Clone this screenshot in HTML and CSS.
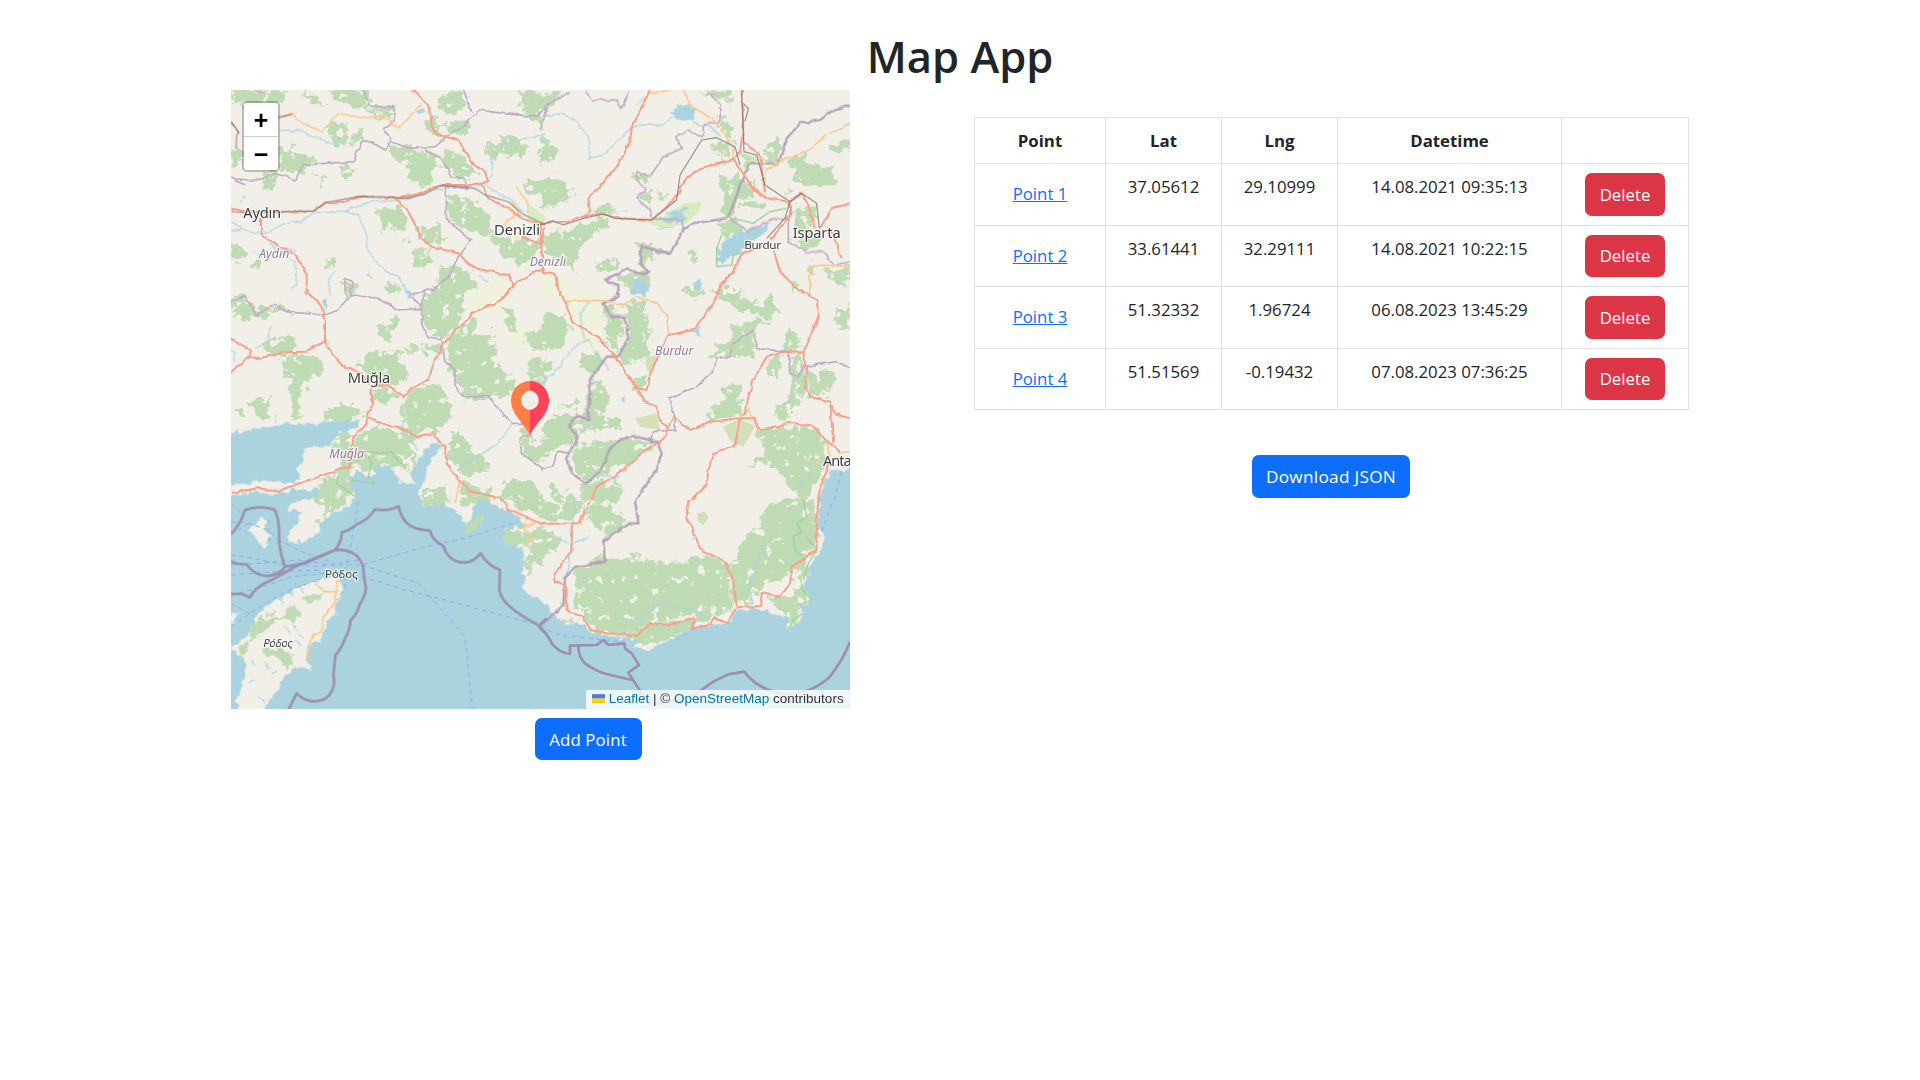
FILE: index.html
```html
<!DOCTYPE html>
<html lang="en">
<head>
<meta charset="utf-8">
<title>Map App</title>
<link rel="stylesheet" href="styles.css">
</head>
<body>
<h1 class="title">Map App</h1>
<main class="layout">
<section class="map-column">
<div class="map">
<svg class="map-canvas" viewBox="0 0 1857 1857" aria-label="Map of southwest Turkey">
<defs>
<filter id="rough" filterUnits="userSpaceOnUse" x="0" y="0" width="1857" height="1857" color-interpolation-filters="sRGB">
<feTurbulence type="fractalNoise" baseFrequency=".035" numOctaves="4" seed="4" result="n"/>
<feDisplacementMap in="SourceGraphic" in2="n" scale="52" xChannelSelector="R" yChannelSelector="G" result="d"/>
<feTurbulence type="fractalNoise" baseFrequency=".035" numOctaves="4" seed="11"/>
<feColorMatrix values="0 0 0 0 0  0 0 0 0 0  0 0 0 0 0  12 0 0 0 -7.9" result="holes"/>
<feComposite in="d" in2="holes" operator="out"/>
</filter>
<filter id="coast" filterUnits="userSpaceOnUse" x="-60" y="-60" width="1980" height="1980" color-interpolation-filters="sRGB">
<feTurbulence type="fractalNoise" baseFrequency=".045" numOctaves="3" seed="7"/>
<feDisplacementMap in="SourceGraphic" scale="26" xChannelSelector="R" yChannelSelector="G"/>
</filter>
<filter id="wiggle" filterUnits="userSpaceOnUse" x="-60" y="-60" width="1980" height="1980" color-interpolation-filters="sRGB">
<feTurbulence type="fractalNoise" baseFrequency=".04" numOctaves="2" seed="2"/>
<feDisplacementMap in="SourceGraphic" scale="12" xChannelSelector="R" yChannelSelector="G"/>
</filter>
</defs>
<rect class="land" width="1857" height="1857"/>

<g class="pale">
<g transform="translate(-18 -15)"><path d="M760 630L780 600 835 565 860 600 845 640ZM600 130L640 120 655 150 625 160Z"/><path class="lime" d="M905 350L960 395 960 425 910 400Z"/></g>
<g transform="translate(927 -15)"><path d="M0 555L60 575 90 600 175 625 200 640 0 640ZM275 150L340 140 330 160 290 165Z"/><path class="lime" d="M310 410L370 395 430 355 485 350 480 375 440 415 370 430ZM610 210L655 210 650 235 620 230Z"/></g>
<g transform="translate(-18 600)"><path d="M740 0L860 0 840 50 820 70 740 70 720 50ZM875 110L905 105 905 145 875 175 835 190Z"/></g>
<g transform="translate(927 600)"><path d="M60 0L195 0 190 35 185 75 180 140 190 195 185 215 150 180 130 150 90 120 75 50Z"/><path class="scrub" d="M285 385L350 370 360 420 300 410ZM550 410L600 385 645 410 610 470 570 450ZM315 200L350 195 340 250 320 240ZM470 670L495 665 505 685 490 705 475 695Z"/></g>
</g>

<g class="forest" filter="url(#rough)">
<g transform="translate(-18 -15)">
<path d="M18 15L190 20 160 60 100 70 20 60ZM230 20L270 30 310 60 260 55ZM300 10L430 15 440 60 380 70 320 40ZM415 65L510 70 500 105 450 95ZM310 115L360 110 370 180 330 190 315 150ZM380 140L420 135 410 165 380 175ZM160 185L230 200 280 225 260 245 200 265 160 240ZM20 180L55 210 30 255 18 250ZM110 265L165 240 150 300 115 330ZM270 265L305 270 290 300ZM350 235L390 245 370 285 345 265ZM480 175L600 190 650 240 625 265 615 300 570 305 540 240 500 215ZM590 100L640 110 640 150 600 145ZM645 120L730 110 740 140 690 150ZM655 200L720 210 760 270 710 285 660 235ZM640 30L710 15 730 55 690 90 640 70ZM780 180L860 150 930 180 890 210 800 215ZM885 20L955 20 950 130 910 90 880 50ZM895 280L955 290 960 340 910 320ZM450 380L530 360 545 390 530 430 470 440ZM580 430L650 415 650 475 600 480ZM530 465L560 470 550 490ZM670 330L740 340 790 390 810 450 740 440 670 400ZM800 450L940 470 930 520 880 545 820 500ZM560 500L610 495 630 535 580 550ZM300 520L340 525 310 550ZM20 490L60 490 50 525 20 515ZM80 495L115 525 90 555ZM425 565L440 570 430 590ZM640 540L720 550 760 600 700 630 640 610ZM480 590L525 600 520 630 490 625ZM350 590L400 600 370 640Z"/></g>
<g transform="translate(927 -15)">
<path d="M0 20L70 20 30 70 0 80ZM0 150L45 180 50 230 0 240ZM0 280L60 280 105 320 60 360 0 365ZM480 20L575 15 580 45 540 45ZM530 100L570 100 585 180 560 160 540 140ZM520 175L565 180 560 225 525 205ZM270 255L330 265 320 300 290 290ZM300 325L335 320 325 365 300 350ZM150 370L230 360 240 385 170 390ZM540 280L610 260 605 330 580 370 570 400 540 390 550 340ZM600 300L650 290 640 330 600 340ZM600 210L640 215 630 250 605 250ZM670 200L720 165 720 220 680 230ZM740 220L790 210 830 250 880 245 895 290 850 310 770 290ZM600 350L680 345 670 380 620 370ZM735 310L750 320 745 340ZM770 360L830 370 830 400 800 430 810 470 770 440ZM860 180L930 175 930 200 870 200ZM10 450L100 430 190 400 200 430 150 450 130 480 110 500 100 560 70 540 70 500 10 510ZM160 530L230 530 230 560 180 560ZM290 475L370 480 390 510 320 520 300 545ZM530 420L590 400 620 430 560 470ZM440 495L470 500 470 535 450 525ZM245 560L325 565 330 600 300 640 250 600 230 580ZM760 470L840 450 830 490 790 490ZM790 540L820 530 830 570 800 560ZM850 560L930 540 930 610 880 590ZM430 605L490 615 490 640 440 630ZM740 590L770 600 760 625ZM345 320L390 325 370 340Z"/></g>
<g transform="translate(-18 600)">
<path d="M20 20L60 10 80 60 150 40 200 60 110 80 60 90 20 70ZM120 160L200 130 220 170 190 190 105 190ZM170 200L270 195 290 250 240 280 230 320 220 390 190 395 205 340 190 270ZM60 340L140 315 130 370 100 390 80 360ZM25 360L55 360 50 380ZM300 350L400 345 420 380 380 390 300 395ZM390 225L450 185 520 190 545 250 530 285 440 280ZM440 300L510 300 515 325 480 345 450 325ZM460 110L510 80 520 120 480 150ZM530 170L585 165 580 190 530 185ZM590 170L650 165 640 190 600 190ZM550 300L640 280 680 340 665 420 550 430 545 360ZM530 340L545 340 540 395 520 375ZM595 0L720 0 720 70 680 120 650 150 610 120 580 60ZM660 160L740 85 755 110 740 130 810 120 815 230 870 280 860 320 780 320 720 325 700 280 670 220ZM830 50L870 60 870 130 850 110ZM905 130L960 120 960 190 910 180ZM910 210L960 200 960 310 920 280ZM680 420L720 440 735 490 780 500 790 550 730 560 690 540 670 480ZM400 430L460 400 560 430 570 500 500 490 460 540 410 550 370 520 380 470ZM330 430L370 430 380 480 370 560 330 560 340 510ZM290 570L380 550 390 610 310 640 260 630ZM430 480L530 490 550 550 520 530 460 530ZM560 500L600 510 590 570 560 540ZM590 600L660 590 680 640 590 640ZM710 580L800 600 800 640 710 640ZM830 580L870 565 950 590 950 640 830 620ZM890 400L910 400 920 460 960 460 960 510 920 520 890 490Z"/></g>
<g transform="translate(927 600)">
<path d="M0 80L60 65 100 120 85 140 50 180 0 170ZM190 40L230 50 250 120 240 150 200 140ZM250 35L320 35 325 140 320 210 240 220 235 190 265 150 260 90ZM190 150L240 150 230 190ZM120 180L170 190 185 240 150 260 120 220ZM0 210L30 210 40 240 0 270ZM160 280L200 290 200 350 180 380 240 390 240 415 170 410 130 430 90 400 140 360ZM280 260L320 270 310 300 280 295ZM510 0L600 0 640 30 710 30 715 60 680 90 620 70 560 40ZM500 190L570 150 570 110 640 90 680 100 640 130 645 210 600 200 520 200ZM730 150L760 125 790 170 730 180ZM690 210L730 190 710 260 685 250ZM800 240L870 235 885 270 870 310 810 315ZM755 200L785 200 800 270 785 330 750 380 700 380 740 320ZM500 360L560 330 540 300 600 280 600 370 560 390 500 390ZM640 400L700 420 760 405 830 420 850 460 860 510 840 560 790 630 770 640 740 560 680 520 620 530 680 480ZM10 400L60 370 120 400 110 450 70 470 10 490ZM60 350L110 330 100 360ZM100 460L200 450 250 440 340 450 330 480 260 530 220 520 190 550 140 575 100 530ZM100 480L200 490 190 540 140 560ZM130 590L190 560 250 600 220 640 120 640ZM30 590L70 600 70 630 40 630ZM880 60L930 50 930 120 890 110ZM0 460L20 450 10 490Z"/></g>
<g transform="translate(-18 1230)">
<path d="M290 0L370 -10 360 15 320 35 290 80 265 75 300 40ZM590 0L650 0 620 25ZM730 75L780 40 760 75 730 105ZM840 90L900 85 905 135 860 150 835 130ZM900 100L950 80 960 190 910 180ZM890 180L920 180 910 240ZM840 0L960 0 960 60 900 40Z"/></g>
<g transform="translate(927 1230)">
<path d="M0 20L120 -10 110 40 90 60 0 60ZM0 80L60 110 50 160 10 170ZM130 10L190 10 250 50 250 90 200 110 180 70 130 60ZM130 185L200 165 210 195 140 210ZM105 220L170 190 250 180 290 165 350 190 430 190 490 160 570 190 570 250 580 320 540 345 490 365 450 350 350 365 300 395 250 405 180 395 140 370 130 330 100 320 120 270 100 250ZM280 400L350 370 470 360 430 400 350 430 290 435ZM600 150L660 60 700 0 830 0 830 60 825 150 780 180 750 230 660 260 620 315 590 310ZM760 180L810 180 790 260 810 300 760 310 780 250ZM680 290L760 290 790 340 740 390 750 350 710 320ZM70 360L105 360 100 375ZM570 190L600 180 600 300 580 310ZM220 450L250 430 240 470Z"/></g>
</g>

<g class="water" filter="url(#coast)">
<path d="M-40 1028L52 1022 92 1010 182 1000 242 1003 312 993 382 988 394 995 382 1010 322 1030 307 1050 292 1070 232 1075 207 1090 217 1110 197 1135 212 1155 207 1170 162 1180 112 1170 62 1175 32 1185-40 1188Z"/>
<path d="M-40 1222L70 1208 132 1214 182 1200 242 1198 262 1205 245 1225 180 1240 170 1265 210 1260 200 1295 172 1330 172 1355 222 1355 262 1330 267 1300 312 1265 357 1250 372 1220 352 1170 372 1145 422 1160 432 1135 482 1120 502 1175 532 1180 552 1190 542 1150 562 1110 582 1080 602 1058 637 1065 617 1090 587 1130 582 1170 562 1210 572 1250 632 1240 672 1260 682 1275 712 1300 727 1255 742 1230 822 1255 862 1280 882 1310 822 1320 822 1360 882 1380 872 1430 882 1470 867 1495 942 1540 967 1570 1007 1605 1057 1600 1077 1630 1147 1640 1217 1650 1207 1675 1257 1680 1297 1655 1337 1640 1387 1615 1447 1600 1487 1605 1517 1560 1587 1555 1637 1575 1672 1580 1667 1630 1722 1570 1707 1550 1742 1530 1717 1495 1727 1460 1747 1410 1767 1380 1782 1340 1762 1310 1767 1260 1762 1230 1777 1180 1797 1145 1900 1130V1900H-40Z"/>
<path d="M1318 75L1345 50 1375 42 1390 65 1385 90 1350 92ZM1455 512L1475 455 1540 420 1625 400 1600 430 1560 455 1520 490 1475 518ZM1198 580L1225 570 1250 580 1245 620 1205 615ZM1388 575L1400 568 1413 582 1408 600 1388 600ZM1300 385L1340 370 1375 380 1350 398 1300 400ZM1300 370L1370 348 1365 362 1320 375ZM555 62L570 55 582 65 570 75ZM515 590L530 600 545 620 530 625ZM272 635L285 630 295 650 280 655ZM1388 730L1400 700 1412 745ZM1165 925L1180 922 1182 940Z"/>
</g>
<g transform="translate(-18 1230)" class="island" filter="url(#coast)">
<path d="M40 640L35 600 55 560 60 480 30 460 35 435 75 400 90 350 150 300 230 260 290 235 345 235 355 260 335 300 330 340 300 370 290 420 250 440 245 480 260 510 220 500 180 525 150 580 100 640ZM70 90L95 70 115 50 125 60 120 90 135 110 125 145 110 140 100 115 75 105ZM0 345L38 345 25 370 0 370ZM0 435L40 430 30 455 0 450Z"/></g>
<g transform="translate(-18 1230)" class="forest" filter="url(#coast)">
<path d="M38 445L75 420 80 375 110 350 120 365 180 340 205 310 225 335 210 365 160 355 120 395 90 405 60 455 50 475ZM230 295L260 280 295 285 280 300 245 310ZM115 440L150 455 165 440 200 465 205 495 185 505 160 470 125 470ZM120 345L150 330 145 350ZM730 75L780 40 760 75 735 105 722 95Z"/></g>

<g class="river" filter="url(#wiggle)">
<g transform="translate(-18 -15)"><path d="M160 135L230 138 280 160 340 185 345 155M18 410L50 430 90 445 130 440 180 415 230 410 270 380 360 378 440 350 500 348 570 335 620 315 720 305 770 300 800 270 800 220 840 175 920 155 960 150M360 380L400 390 425 450 430 500 480 560 520 575 545 615M18 440L50 435M45 350L60 330M130 470L160 500 210 530 215 600 200 615M330 560L310 590 315 630M780 300L830 330 870 350 890 380M150 490L215 495M760 570L790 590"/></g>
<g transform="translate(927 -15)"><path d="M0 95L70 85 110 110 145 155 150 220 190 210 250 150 290 120 370 120 400 95M460 115L510 125 540 155M350 430L400 425M245 380L260 380M290 60L310 40"/></g>
<g transform="translate(-18 600)"><path d="M135 110L130 150 90 175M300 30L300 60M18 180L30 190 25 215M150 375L150 400M860 400L830 450 760 500 700 530M540 430L580 480M545 380L530 410"/></g>
<g transform="translate(927 600)"><path d="M0 280L40 250 80 200 110 160 150 150 170 190 210 240M150 30L120 70 130 150M120 430L155 405M130 590L160 555 240 560M760 600L820 550"/></g>
<g transform="translate(927 1230)"><path d="M105 0L95 130 80 220M95 135L150 108M95 135L65 120M680 120L650 180 645 230 625 270 640 310M290 355L350 320 370 300 400 320 470 335 495 365M455 110L470 120"/></g>
<g transform="translate(-18 1230)"><path d="M160 290L175 310M195 275L205 290M225 260L235 280M180 380L195 400M205 375L220 395M220 400L235 415M210 420L230 440M80 480L90 500M120 490L130 510M70 550L90 540M100 590L120 605M140 520L155 515"/></g>
</g>
<g class="park">
<path transform="translate(-18 600)" d="M340 555L335 580 365 600 390 620M425 485L470 490 500 485 520 515 545 530M430 500L440 520 430 560 450 580 380 570"/>
<path transform="translate(927 -15)" d="M545 450L530 490 530 545 575 540 580 510 620 500M580 400L640 415 690 380 740 370"/>
<path transform="translate(927 1230)" d="M790 0L800 50 770 70 785 95 760 110 765 150 790 170M800 110L830 150 805 190 790 240M780 260L815 300 780 315M740 400L760 360 790 340"/>
</g>

<g class="ferry">
<path transform="translate(-18 1230)" d="M18 165L60 170 180 195 280 200 400 180M18 195L100 190 220 180 320 195 410 195 600 140 700 120 880 65M18 225L150 215 290 210M18 285L100 265 200 230 300 220M18 380L90 330 180 275 290 235M18 310L90 350M160 120L230 155 330 190M18 65L70 70 130 90 160 120M18 10L55 45M130 60L135 130M400 5L375 150 360 210 360 265 335 300M410 195L580 250 720 410 742 627M410 230L540 270 640 295 960 380M18 105L70 70"/>
<path transform="translate(927 1230)" d="M0 380L60 405 150 415 240 425 275 410M410 420L460 385M875 10L840 110M910 -110L880 10"/></g>

<g class="border" filter="url(#wiggle)">
<g transform="translate(-18 -15)"><path d="M410 15L440 65 505 65 510 110 475 130 500 165 480 195 430 165 410 170 385 230 300 235 235 240 210 285 150 265 110 285 70 285 18 280M500 170L550 190 630 185 660 155 720 120 765 75 830 85 935 95 960 70M600 195L650 220 680 275 720 280 725 310 660 305 665 405 740 465 700 515 670 575 630 610 560 628M715 15L740 80M18 280L60 300M360 630L360 580 385 590 375 630M90 18L120 20"/></g>
<g transform="translate(927 -15)"><path d="M0 135L15 100 20 60 90 20M135 20L160 45 230 45 245 70 265 20M500 20L540 55 540 110 490 120 490 155 470 150 450 135 410 155 425 190 370 215 330 275 290 260 290 285 320 310 290 340 330 375 335 400 425 405 430 435M570 400L620 440 700 400 745 400 745 470 800 500 850 500 880 540 930 530"/></g>
<g transform="translate(-18 600)"><path d="M18 35L60 20 95 78 150 40 180 65 240 70 300 75 340 60 380 15 460 25 520 60 590 55 600 0M560 20L590 50 590 100 610 140 650 150 660 215 690 240 690 290 720 320 790 320 860 400 920 400M920 430L885 445 890 490 960 540"/></g>
<g transform="translate(927 600)"><path d="M200 200L235 200M335 460L340 425 405 420 405 380 385 325 470 290 520 245 530 205 570 200 580 160 640 120 650 175 745 185 750 250 775 260 790 230 890 215 930 235M0 540L40 530 50 485 90 485"/></g>
</g>
<g class="border thick" filter="url(#wiggle)">
<path transform="translate(927 -15)" d="M930 60L880 75 840 105 780 115 740 160 715 235 630 235 610 270 580 360 560 400 460 415 430 435 390 505 305 485 300 535 325 560 310 570 260 550 195 585 235 600 235 630"/>
<path transform="translate(927 600)" d="M235 0L235 20 190 40 215 80 255 80 265 150 230 200 200 200 150 270 145 390 110 375 85 410 115 440 80 500 95 550 140 580 180 545 205 490Q225 445 280 438L350 455 365 490 350 540 285 630"/>
<path transform="translate(927 1230)" d="M285 0L295 70 265 70 190 125 195 185 100 205 75 230 70 315 0 378"/>
</g>
<g class="sea-border">
<path transform="translate(-18 1230)" d="M18 102Q45 75 60 30Q100 15 148 28Q165 60 162 120 165 160 180 200Q165 225 125 228 85 225 65 193 40 195 18 185M18 282L50 281 75 292Q90 260 140 240L210 200Q265 175 330 150Q385 145 405 180 417 195 416 225L423 265Q420 290 403 315 398 340 376 362 375 390 360 415 350 445 331 466L325 525Q335 570 300 597 250 617 215 580L190 630M180 200L240 190 330 150Q350 125 350 97 375 90 395 73 430 60 450 28 490 35 520 18 530 60 555 77 580 90 615 92 620 120 655 138 665 170 690 182 735 200 767 160 785 195 825 210L823 270Q830 300 855 320 890 350 935 372L965 402M940 378L965 355"/>
<path transform="translate(927 1230)" d="M0 385Q25 405 35 430 60 460 90 462V437L170 435 190 420 205 435 253 430 255 445 275 460 297 495 265 518 305 580 335 615M115 437Q115 470 135 490 170 515 200 522L275 540M335 612Q430 600 470 580L520 545 565 523 613 515Q650 565 720 580 800 590 865 535 910 480 930 425"/></g>

<g class="road minor" filter="url(#wiggle)">
<path transform="translate(-18 -15)" d="M160 100L200 87 235 115 290 140 340 85 420 100 470 90 520 128 550 100 590 58M840 365L870 390 835 420 880 460M875 300L905 350 910 385M860 350L880 380 850 410"/>
<path transform="translate(927 -15)" d="M330 25L390 15M430 15L450 60 530 110 580 190 580 220M670 300L680 255 740 220 800 200 860 150 930 115M810 630L810 545 850 540 930 545"/>
<path transform="translate(927 600)" d="M75 35L180 30 250 45 290 20 350 40 380 75 385 130M600 385L625 360 640 385M865 460L870 500M900 487L930 485M810 0L810 15"/>
<path transform="translate(-18 1230)" d="M340 240L330 280 330 310 295 350 290 390 262 405 245 470 260 485M270 250L300 275 330 275M690 10L705 -60M905 50L900 85 920 120 895 140M885 85L935 65"/>
</g>
<g class="road" filter="url(#wiggle)">
<path transform="translate(-18 -15)" d="M565 15L615 70 620 120 640 150 700 165 740 235 780 260 790 290 750 300 680 300 640 300 590 325 520 340 410 335 340 355 300 355 265 378 160 380 60 380 18 370M108 400L108 445 160 485 210 505 245 570 245 630M510 340L550 380 590 460 620 485 700 505 750 550 850 570 865 600 910 570 960 550M865 600L840 630M770 300L790 340 850 370 890 400 950 420M890 455L950 480 955 425M18 110L40 145"/>
<path transform="translate(927 -15)" d="M330 15L275 130 270 170 235 240 175 310 145 340 150 380 120 400 70 410 0 415M0 420L5 500 10 560 45 570 60 630M130 395L185 385 225 398 335 405 380 365 415 325 440 280 480 250 580 225 600 200 610 130 605 15M580 225L640 310 680 340 750 350 785 325 805 360 825 430M610 170L660 210 675 325M750 350L750 390 720 430 690 465M535 630L540 600 580 560 605 505 670 485M700 490L720 560 790 630M930 355L875 370 840 430M870 430L905 520"/>
<path transform="translate(-18 600)" d="M245 0L290 50 300 100 300 155 320 190 350 225 410 250 440 290 490 285 535 320 560 295 610 270 630 210 655 165 690 120 730 90 740 70 830 30 855 0M18 148L75 180 70 200 18 250M70 203L110 203 180 187 240 185 300 155M435 290L445 340 425 380 425 400 385 440 375 530 340 540 300 555 220 580 160 605 100 595 18 608M420 382L500 410 540 420 575 440 620 430 660 470 665 520 700 570 740 605 830 625"/>
<path transform="translate(927 600)" d="M60 0L100 100 180 145 240 220 290 295 320 300 340 230 385 135 460 120 520 40 535 0M295 300L310 335 350 350 365 400 385 410 400 380 450 420 510 395 600 385 640 385 660 420 720 410 740 395 820 410 870 460 900 485M385 410L380 440 310 485 260 530 230 555 170 590 155 630M600 385L585 465 520 490 505 540 500 585 455 630M610 375L640 270 680 200 715 187 790 187 835 80 830 30 780 0M790 187L800 250 795 290 810 320 870 335 880 460M875 345L885 370 930 385M870 520L840 590 835 630"/>
<path transform="translate(927 1230)" d="M150 0L130 40 120 70 0 72M95 75L95 150 45 220 45 245 75 258 80 330 130 350 150 390 200 400 290 405 330 370 380 375 465 355 460 385 510 375 520 350 560 370 590 322 660 318 665 280 720 290 755 240 755 200 830 150 830 60 835 0M445 0L440 50 470 120 480 145 560 190 580 240 590 320"/>
<path transform="translate(-18 1230)" d="M830 -5L850 25 910 55 960 75"/>
</g>
<g class="rail">
<path transform="translate(-18 -15)" d="M18 380L60 383 160 383 210 378 265 378 305 352 410 333 470 335 545 340 600 327 650 300 750 310 780 330 850 350 890 385 960 420M18 110L42 142 35 150 33 190M160 97L200 88"/>
<path transform="translate(927 -15)" d="M0 420L40 408 70 420 130 400 190 387 225 400 335 405 410 345 420 270 485 165 530 158 585 185 600 240M605 15L612 200 650 210 675 300 750 350 785 325 830 355 838 430M610 55L625 70 615 110M750 350L735 400 680 460"/>
</g>

<g class="labels">
<text x="37" y="385" textLength="113">Aydın</text>
<text x="789" y="434" textLength="138">Denizli</text>
<text x="1685" y="445" textLength="144">Isparta</text>
<text class="small" x="1540" y="477" textLength="110">Burdur</text>
<text x="350" y="880" textLength="128">Muğla</text>
<text x="1776" y="1129" textLength="135">Antalya</text>
<text class="small" x="282" y="1465" textLength="98">Ρόδος</text>
<text class="small italic" x="97" y="1671" textLength="88">Ρόδος</text>
<text class="region" x="84" y="504" textLength="91">Aydın</text>
<text class="region" x="896" y="528" textLength="109">Denizli</text>
<text class="region" x="1272" y="795" textLength="115">Burdur</text>
<text class="region" x="295" y="1103" textLength="104">Muğla</text>
</g>
</svg>
<div class="zoom"><button class="zoom-btn">+</button><button class="zoom-btn">−</button></div>
<svg class="marker" viewBox="0 0 38 54"><path fill="#ff7e47" d="M19 0A19 19 0 0 0 0 19C0 33 10 38 19 54V29A9.8 9.8 0 0 1 19 9.500Z"/><path fill="#ff4259" d="M19 0A19 19 0 0 1 38 19C38 33 28 38 19 54V29A9.800 9.800 0 0 0 19 9.500Z"/></svg>
<div class="attribution"><svg class="flag" viewBox="0 0 12 8"><path fill="#4c7be1" d="M0 0h12v4H0z"/><path fill="#ffd500" d="M0 4h12v3H0z"/><path fill="#e0bc00" d="M0 7h12v1H0z"/></svg> <a href="#">Leaflet</a> | © <a href="#">OpenStreetMap</a> contributors</div>
</div>
<button class="btn add">Add Point</button>
</section>
<section class="table-column">
<table class="points">
<colgroup><col class="c-point"><col class="c-num"><col class="c-num"><col class="c-date"><col class="c-action"></colgroup>
<thead><tr><th>Point</th><th>Lat</th><th>Lng</th><th>Datetime</th><th></th></tr></thead>
<tbody>
<tr><td><a class="link" href="#">Point 1</a></td><td>37.05612</td><td>29.10999</td><td>14.08.2021 09:35:13</td><td><button class="btn danger">Delete</button></td></tr>
<tr><td><a class="link" href="#">Point 2</a></td><td>33.61441</td><td>32.29111</td><td>14.08.2021 10:22:15</td><td><button class="btn danger">Delete</button></td></tr>
<tr><td><a class="link" href="#">Point 3</a></td><td>51.32332</td><td>1.96724</td><td>06.08.2023 13:45:29</td><td><button class="btn danger">Delete</button></td></tr>
<tr><td><a class="link" href="#">Point 4</a></td><td>51.51569</td><td>-0.19432</td><td>07.08.2023 07:36:25</td><td><button class="btn danger">Delete</button></td></tr>
</tbody>
</table>
<button class="btn download">Download JSON</button>
</section>
</main>
</body>
</html>
```
FILE: styles.css
```css
* { box-sizing: border-box; }
body {
  margin: 0;
  background: #fff;
  color: #212529;
  font: 16.8px/27px "Open Sans", "Noto Sans", sans-serif;
}
.title {
  margin: 0;
  padding-top: 30px;
  height: 90px;
  font-size: 43.5px;
  line-height: 54px;
  font-weight: 600;
  text-align: center;
}
.layout {
  display: flex;
  justify-content: space-between;
  align-items: flex-start;
  width: 1458px;
  margin: 0 auto;
}
.map-column { display: flex; flex-direction: column; align-items: center; width: 714px; }
.map { position: relative; align-self: flex-start; width: 619px; height: 619px; overflow: hidden; }
.map-canvas { display: block; width: 100%; height: 100%; }

.land, .island { fill: #f2efe9; }
.pale { fill: #f0f2db; }
.lime { fill: #d8ecbd; }
.scrub { fill: #d5e0b9; }
.forest { fill: #bfdbb3; }
.water { fill: #aad3df; }
.river, .park, .ferry, .border, .sea-border, .road, .rail { fill: none; stroke-linejoin: round; }
.river { stroke: #aad3df; stroke-width: 3.5; }
.park { stroke: #9fcf9c; stroke-width: 4; }
.ferry { stroke: #8eabe9; stroke-width: 3; stroke-dasharray: 14 11; }
.border { stroke: #c0aec4; stroke-width: 5; }
.thick { stroke: #b3a0b8; stroke-width: 7; }
.sea-border { stroke: #9c8fb0; stroke-width: 8; }
.road { stroke: #f9a08b; stroke-width: 6; }
.minor { stroke: #fbc98c; stroke-width: 5; }
.rail { stroke: #77706d; stroke-opacity: .75; stroke-width: 3.5; }
.labels {
  font-family: "Noto Sans", sans-serif;
  font-size: 44px;
  fill: #3c3c3c;
  stroke: rgba(255, 255, 255, .75);
  stroke-width: 7;
  stroke-linejoin: round;
  paint-order: stroke;
}
.small { font-size: 35px; }
.italic { font-style: italic; }
.region { font-size: 37px; font-style: italic; fill: #96759c; }

.zoom {
  position: absolute;
  left: 11px;
  top: 11px;
  width: 38px;
  display: grid;
  border: 2px solid rgba(0, 0, 0, .22);
  border-radius: 5px;
  background-clip: padding-box;
}
.zoom-btn {
  height: 33px;
  padding: 0;
  border: 0;
  border-radius: 0 0 3px 3px;
  background: #fff;
  color: #000;
  font: bold 25px/32px "Liberation Sans", Arial, sans-serif;
}
.zoom-btn:first-child { height: 34px; border-bottom: 1px solid #ccc; border-radius: 3px 3px 0 0; }
.marker { position: absolute; left: 280px; top: 291px; width: 38px; height: 54px; }
.attribution {
  position: absolute;
  right: 0;
  bottom: 0;
  width: 264px;
  height: 19px;
  padding-left: 6px;
  background: rgba(255, 255, 255, .8);
  color: #333;
  font: 13.5px/17px "Liberation Sans", Arial, sans-serif;
  white-space: nowrap;
}
.attribution a { color: #0078a8; text-decoration: none; }
.flag { width: 13px; height: 9px; }

.btn {
  height: 42.5px;
  padding: 0;
  border: 0;
  border-radius: 6.75px;
  background: #0d6efd;
  color: #fff;
  font: inherit;
}
.add { width: 107px; height: 42px; margin-top: 9px; letter-spacing: .15px; }
.danger { display: block; width: 80px; margin: 0 auto; background: #dc3545; }
.download { width: 158px; margin: 45px 1px 0 0; font-size: 17.2px; letter-spacing: .3px; }

.table-column { display: flex; flex-direction: column; align-items: center; width: 715px; padding-top: 27px; }
.points { width: 715px; border-collapse: collapse; table-layout: fixed; text-align: center; }
.points th, .points td { padding: 9px; border: 1px solid #dee2e6; vertical-align: top; }
.points th { font-weight: 700; }
.c-point { width: 131px; }
.c-num { width: 116px; }
.c-date { width: 224px; }
.c-action { width: 127px; }
.link { display: inline-block; padding-top: 7.4px; color: #0d6efd; }
```
